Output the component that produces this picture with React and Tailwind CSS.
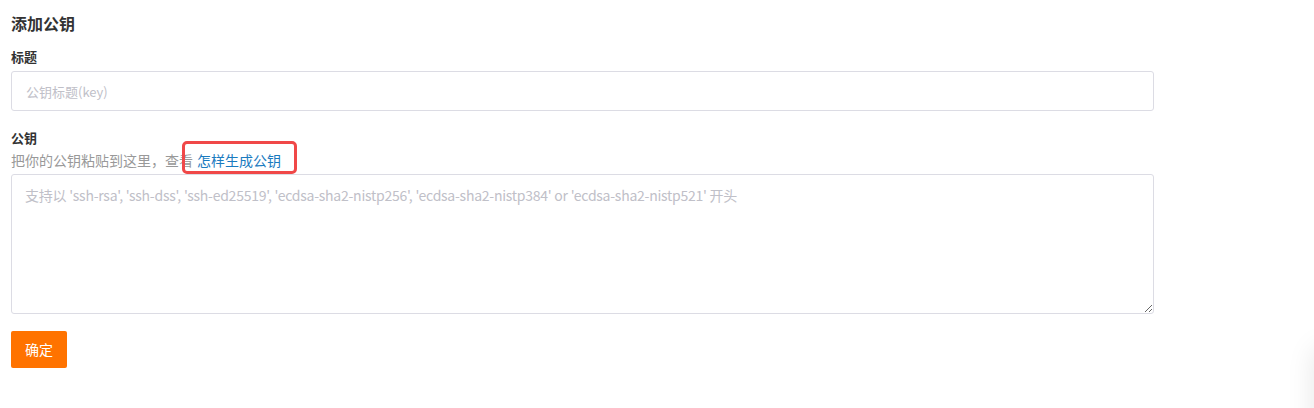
import React from "react";

function App() {
    return (
        <div className="relative h-[408px] w-[1314px] overflow-hidden bg-white font-['Microsoft_YaHei','Noto_Sans_CJK_SC',sans-serif] text-[#333]">
            <div className="w-[1154px] pl-[11px] pt-[11px]">
                <h2 className="text-[16px] font-bold leading-[24px]">添加公钥</h2>

                <div className="mt-[13px]">
                    <label className="block text-[13px] font-bold leading-[17px]">标题</label>
                    <input
                        className="mt-[6px] block h-[40px] w-full rounded-[3px] border border-[#dcdce4] px-[14px] text-[13px] outline-none placeholder:text-[#c0c0c8]"
                        placeholder="公钥标题(key)"
                    />
                </div>

                <div className="mt-[18px]">
                    <label className="block text-[13px] font-bold leading-[18px]">公钥</label>
                    <p className="mt-[3px] flex items-center text-[14px] leading-[20px] text-[#999]">
                        把你的公钥粘贴到这里，查看
                        <span className="relative ml-[4px]">
                            <a className="text-[#1a7bbf]">怎样生成公钥</a>
                            <span className="absolute left-[-15px] top-[-9px] h-[33px] w-[115px] rounded-[5px] border-[3px] border-[#f04848]" />
                        </span>
                    </p>
                    <textarea
                        className="mt-[4px] block h-[140px] w-full rounded-[3px] border border-[#dcdce4] px-[13px] py-[10px] text-[14px] leading-[20px] tracking-[-0.25px] outline-none placeholder:text-[#c0c0c8]"
                        placeholder="支持以 'ssh-rsa', 'ssh-dss', 'ssh-ed25519', 'ecdsa-sha2-nistp256', 'ecdsa-sha2-nistp384' or 'ecdsa-sha2-nistp521' 开头"
                    />
                </div>

                <button className="mt-[17px] h-[37px] w-[56px] rounded-[2px] bg-[#ff7300] text-[14px] text-white">
                    确定
                </button>
            </div>
            <div className="absolute bottom-[-30px] right-[-60px] h-[90px] w-[60px] rounded-[8px] shadow-[0_0_28px_rgba(0,0,0,0.1)]" />
        </div>
    );
}

export default App;
